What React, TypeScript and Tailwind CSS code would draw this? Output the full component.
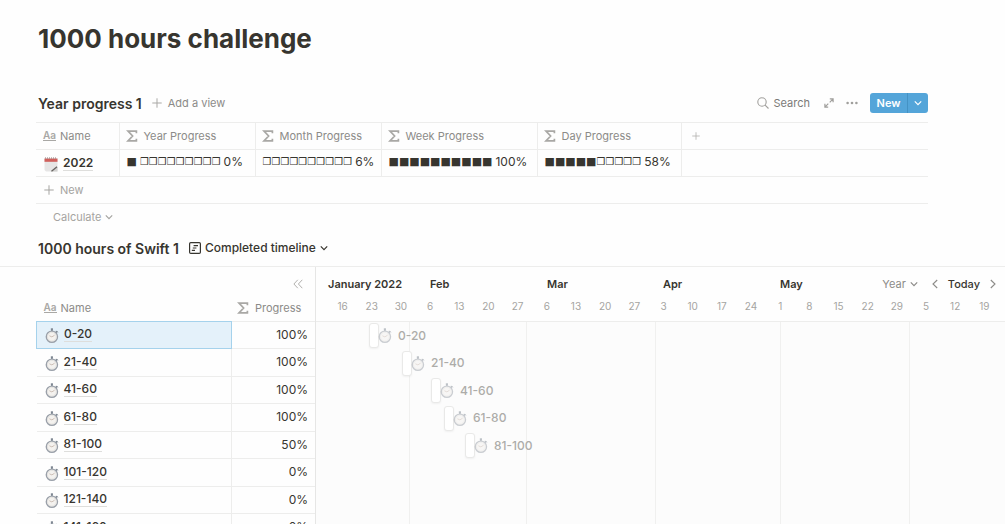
import React from 'react'

const progressColumns = [
  { label: 'Year Progress', filled: '■', empty: '❒❒❒❒❒❒❒❒❒', gap: 'gap-[3px]', percent: '0%', width: 'w-[136px]' },
  { label: 'Month Progress', filled: '', empty: '❒❒❒❒❒❒❒❒❒❒', gap: '', percent: '6%', width: 'w-[126px]' },
  { label: 'Week Progress', filled: '■■■■■■■■■■', empty: '', gap: '', percent: '100%', width: 'w-[156px]' },
  { label: 'Day Progress', filled: '■■■■■', empty: '❒❒❒❒❒', gap: '', percent: '58%', width: 'w-[144px]' },
]

const items = [
  { name: '0-20', progress: '100%', start: 53 },
  { name: '21-40', progress: '100%', start: 86 },
  { name: '41-60', progress: '100%', start: 115 },
  { name: '61-80', progress: '100%', start: 128 },
  { name: '81-100', progress: '50%', start: 149 },
  { name: '101-120', progress: '0%' },
  { name: '121-140', progress: '0%' },
  { name: '141-160', progress: '0%' },
]

const weeks = [16, 23, 30, 6, 13, 20, 27, 6, 13, 20, 27, 3, 10, 17, 24, 1, 8, 15, 22, 29, 5, 12, 19]

function SigmaIcon() {
  return (
    <svg className="size-3 shrink-0 text-[#a9a8a5]" viewBox="0 0 12 12" fill="none" stroke="currentColor" strokeWidth="1.7">
      <path d="M10.4 3.2V1.2H2L6.6 6L2 10.8H10.4V8.8" />
    </svg>
  )
}

function TitleIcon() {
  return <span className="border-b border-[#a9a8a5] text-[10px] leading-[9px] font-semibold text-[#a9a8a5]" aria-hidden="true">Aa</span>
}

function PlusIcon({ className }: { className: string }) {
  return (
    <svg className={className} viewBox="0 0 10 10" fill="none" stroke="currentColor">
      <path d="M5 0.3V9.7M0.3 5H9.7" />
    </svg>
  )
}

function ChevronDown({ className }: { className: string }) {
  return (
    <svg className={className} viewBox="0 0 8 8" fill="none" stroke="currentColor" strokeWidth="1.2">
      <path d="M0.8 2.4L4 5.6L7.2 2.4" />
    </svg>
  )
}

function Stopwatch({ className }: { className: string }) {
  return (
    <svg className={className} viewBox="0 0 14 15" fill="none">
      <path d="M6.9 0.8V3M10.7 4.6L12.1 3.4" stroke="#7f8893" strokeWidth="1.8" />
      <path d="M5.8 1.1H8" stroke="#7f8893" strokeWidth="1.4" />
      <path d="M11.5 2.9L12.8 4.3" stroke="#7f8893" />
      <circle cx="6.9" cy="8.7" r="5.6" fill="#f4f2ef" stroke="#9aa0a9" strokeWidth="1.4" />
      <circle cx="6.9" cy="8.7" r="4.4" stroke="#dedcda" strokeWidth="0.7" />
      <path d="M4.4 7.8L6.9 8.9L9.6 7.2" stroke="#c4b2a8" strokeWidth="0.8" />
    </svg>
  )
}

function CalendarIcon() {
  return (
    <svg className="mt-0.5 h-[15px] w-3.5 shrink-0" viewBox="0 0 14 15">
      <path d="M0.5 1H13.5V14.5H2L0.5 13Z" fill="#e6e5e5" />
      <path d="M0.5 1.6H13.5V4.8H0.5Z" fill="#d0605c" />
      <path d="M1 1H13" stroke="#8d7b7b" strokeDasharray="1 1" />
      <path d="M13.5 10V14.5H6.5Z" fill="#d2d1d0" />
      <path d="M7.5 14.2L13 9.8" stroke="#65625f" strokeWidth="1.3" />
    </svg>
  )
}

function YearProgress() {
  return (
    <section className="pr-[77px] pl-9">
      <div className="flex h-[38px] items-center">
        <h2 className="ml-0.5 text-[14px] font-semibold">Year progress 1</h2>
        <button className="ml-2.5 flex items-center gap-1.5 text-[11px] text-[#8c8b88]">
          <PlusIcon className="size-2.5 text-[#a9a8a5]" />
          Add a view
        </button>
        <div className="ml-auto flex items-center text-[11px]">
          <button className="flex items-center gap-1 text-[#7b7a77]">
            <svg className="size-3 text-[#a09f9c]" viewBox="0 0 12 12" fill="none" stroke="currentColor" strokeWidth="1.1">
              <circle cx="5" cy="5" r="4.2" />
              <path d="M8.1 8.1L11.5 11.5" />
            </svg>
            Search
          </button>
          <button className="ml-3.5 text-[#a09f9c]" aria-label="Expand">
            <svg className="size-2.5" viewBox="0 0 10 10" fill="none" stroke="currentColor" strokeWidth="1.2">
              <path d="M5.8 0.9H9.1V4.2M9.1 0.9L5.7 4.3M4.2 9.1H0.9V5.8M0.9 9.1L4.3 5.7" />
            </svg>
          </button>
          <button className="ml-3 text-[#a09f9c]" aria-label="More">
            <svg className="h-1 w-3" viewBox="0 0 12 4" fill="currentColor">
              <circle cx="1.6" cy="2" r="1.3" />
              <circle cx="6" cy="2" r="1.3" />
              <circle cx="10.4" cy="2" r="1.3" />
            </svg>
          </button>
          <div className="ml-3 flex h-5 overflow-hidden rounded-[3px] bg-[#54a5d9] text-white">
            <button className="w-[38px] border-r border-[#4492c4] text-[11px] font-semibold">New</button>
            <button className="flex w-5 items-center justify-center" aria-label="More new options">
              <ChevronDown className="size-2" />
            </button>
          </div>
        </div>
      </div>

      <table className="w-full table-fixed border-collapse text-left">
        <thead>
          <tr className="h-[27px] border-y border-[#ededec] text-[11px] text-[#8c8b88]">
            <th className="w-[83px] border-r border-[#ededec] font-normal">
              <div className="flex items-center gap-1 pl-[7px]"><TitleIcon />Name</div>
            </th>
            {progressColumns.map((column) => (
              <th key={column.label} className={`${column.width} border-r border-[#ededec] font-normal`}>
                <div className="flex items-center gap-1.5 pl-1.5"><SigmaIcon />{column.label}</div>
              </th>
            ))}
            <th>
              <button className="flex pl-2.5 text-[#b1b0ad]" aria-label="Add column"><PlusIcon className="size-2" /></button>
            </th>
          </tr>
        </thead>
        <tbody>
          <tr className="h-[27px] border-b border-[#ededec] text-[12px]">
            <td className="border-r border-[#ededec]">
              <div className="flex items-center gap-[5px] pl-2">
                <CalendarIcon />
                <a href="#" className="border-b border-[#dededc] leading-[14px] font-semibold">2022</a>
              </div>
            </td>
            {progressColumns.map((column) => (
              <td key={column.label} className="border-r border-[#ededec] pb-0.5">
                <div className="flex items-center gap-[3px] pl-[7px] leading-4 whitespace-nowrap">
                  <span className={`flex items-baseline font-['DejaVu_Sans',sans-serif] ${column.gap}`}>
                    {column.filled && <span className="text-[11px]">{column.filled}</span>}
                    {column.empty && <span className="text-[10px] font-bold">{column.empty}</span>}
                  </span>
                  {column.percent}
                </div>
              </td>
            ))}
            <td />
          </tr>
        </tbody>
      </table>
      <button className="flex h-[27px] w-full items-center gap-1.5 border-b border-[#ededec] pl-2 text-[11px] text-[#a5a4a1]">
        <PlusIcon className="size-2.5" />
        New
      </button>
      <button className="flex h-[26px] items-center gap-1 pl-[17px] text-[11px] text-[#a5a4a1]">
        Calculate
        <ChevronDown className="size-2" />
      </button>
    </section>
  )
}

function ItemTable() {
  return (
    <div className="w-[280px] shrink-0 border-r border-[#e6e6e5]">
      <div className="flex h-[34px] items-center justify-end pr-3">
        <button className="text-[#b1b0ad]" aria-label="Hide table">
          <svg className="size-2.5" viewBox="0 0 10 10" fill="none" stroke="currentColor">
            <path d="M4.8 0.8L0.9 5L4.8 9.2M9.3 0.8L5.4 5L9.3 9.2" />
          </svg>
        </button>
      </div>
      <table className="w-full table-fixed border-collapse text-[12px]">
        <thead>
          <tr className="h-5 border-b border-[#ededec] text-[11px] leading-[14px] text-[#8c8b88]">
            <th className="pb-[5px] font-normal">
              <div className="flex items-center gap-1 pl-[7px]"><TitleIcon />Name</div>
            </th>
            <th className="w-[84px] pb-[5px] font-normal">
              <div className="flex items-center gap-1.5 pl-1.5"><SigmaIcon />Progress</div>
            </th>
          </tr>
        </thead>
        <tbody>
          {items.map((item, i) => (
            <tr key={item.name} className="border-b border-[#ededec] odd:h-[27px] even:h-7">
              <td className={i === 0 ? 'border border-[#a5d2ec] bg-[#e4f1fa]' : 'border-r border-[#ededec]'}>
                <div className="flex items-center gap-[5px] pl-2">
                  <Stopwatch className="mt-0.5 h-[15px] w-3.5 shrink-0" />
                  <a href="#" className="border-b border-[#dededc] leading-[14px] font-medium">{item.name}</a>
                </div>
              </td>
              <td className="pr-[7px] text-right">{item.progress}</td>
            </tr>
          ))}
        </tbody>
      </table>
    </div>
  )
}

function Timeline() {
  return (
    <div className="flex min-w-0 flex-1 flex-col">
      <div className="flex h-[34px] shrink-0 items-center justify-between pr-[9px] pl-3">
        <div className="grid grid-cols-[102px_117px_116px_117px_auto] text-[11px] font-semibold">
          <span>January 2022</span>
          <span>Feb</span>
          <span>Mar</span>
          <span>Apr</span>
          <span>May</span>
        </div>
        <div className="flex items-center text-[11px]">
          <button className="flex items-center gap-1 text-[#8c8b88]">
            Year
            <ChevronDown className="size-2" />
          </button>
          <button className="ml-3.5 text-[#8c8b88]" aria-label="Previous">
            <svg className="h-2.5 w-1.5" viewBox="0 0 6 10" fill="none" stroke="currentColor" strokeWidth="1.1"><path d="M5.2 1L1 5L5.2 9" /></svg>
          </button>
          <button className="ml-2.5 font-medium">Today</button>
          <button className="ml-2.5 text-[#8c8b88]" aria-label="Next">
            <svg className="h-2.5 w-1.5" viewBox="0 0 6 10" fill="none" stroke="currentColor" strokeWidth="1.1"><path d="M0.8 1L5 5L0.8 9" /></svg>
          </button>
        </div>
      </div>
      <div className="flex h-[21px] shrink-0 border-b border-[#ededec] pr-1.5 pl-3 text-[10px] leading-[11px] text-[#a5a4a1]">
        {weeks.map((day, i) => (
          <span key={i} className="flex-1 text-center">{day}</span>
        ))}
      </div>
      <div className="relative min-h-0 flex-1 bg-[#fcfcfc]">
        <div className="absolute inset-0 grid grid-cols-[94px_117px_129px_125px_129px_auto] divide-x divide-[#f0f0ef]">
          <div /><div /><div /><div /><div /><div />
        </div>
        {items.filter((item) => item.start !== undefined).map((item) => (
          <div key={item.name} className="relative flex items-center odd:h-7 even:h-[27px]" style={{ paddingLeft: item.start }}>
            <span className="h-[25px] w-2.5 rounded-[3px] border border-[#e9e9e8] bg-white shadow-xs" />
            <Stopwatch className="-ml-px h-[15px] w-3.5 opacity-50" />
            <span className="ml-1.5 text-[12px] font-medium text-[#adaca9]">{item.name}</span>
          </div>
        ))}
      </div>
    </div>
  )
}

export default function App() {
  return (
    <main className="flex h-screen flex-col overflow-hidden bg-[#fefefe] font-['Inter','Liberation_Sans',sans-serif] text-[#37352f]">
      <h1 className="pt-[22px] pl-[38px] text-[26px] leading-[34px] font-bold">1000 hours challenge</h1>
      <div className="mt-7">
        <YearProgress />
      </div>
      <section className="flex min-h-0 flex-1 flex-col">
        <div className="flex h-[37px] shrink-0 items-center border-b border-[#ededec] pl-[38px]">
          <h2 className="text-[14px] font-semibold">1000 hours of Swift 1</h2>
          <button className="ml-2.5 flex items-center gap-1 text-[12px] font-medium">
            <svg className="size-3" viewBox="0 0 12 12" fill="none" stroke="currentColor" strokeWidth="1.2">
              <rect x="0.6" y="0.6" width="10.8" height="10.8" rx="1.2" />
              <path d="M4.6 3.6H9M3.8 6H7.4M2.8 8.4H6" />
            </svg>
            Completed timeline
            <ChevronDown className="size-2" />
          </button>
        </div>
        <div className="flex min-h-0 flex-1 pl-9">
          <ItemTable />
          <Timeline />
        </div>
      </section>
    </main>
  )
}
